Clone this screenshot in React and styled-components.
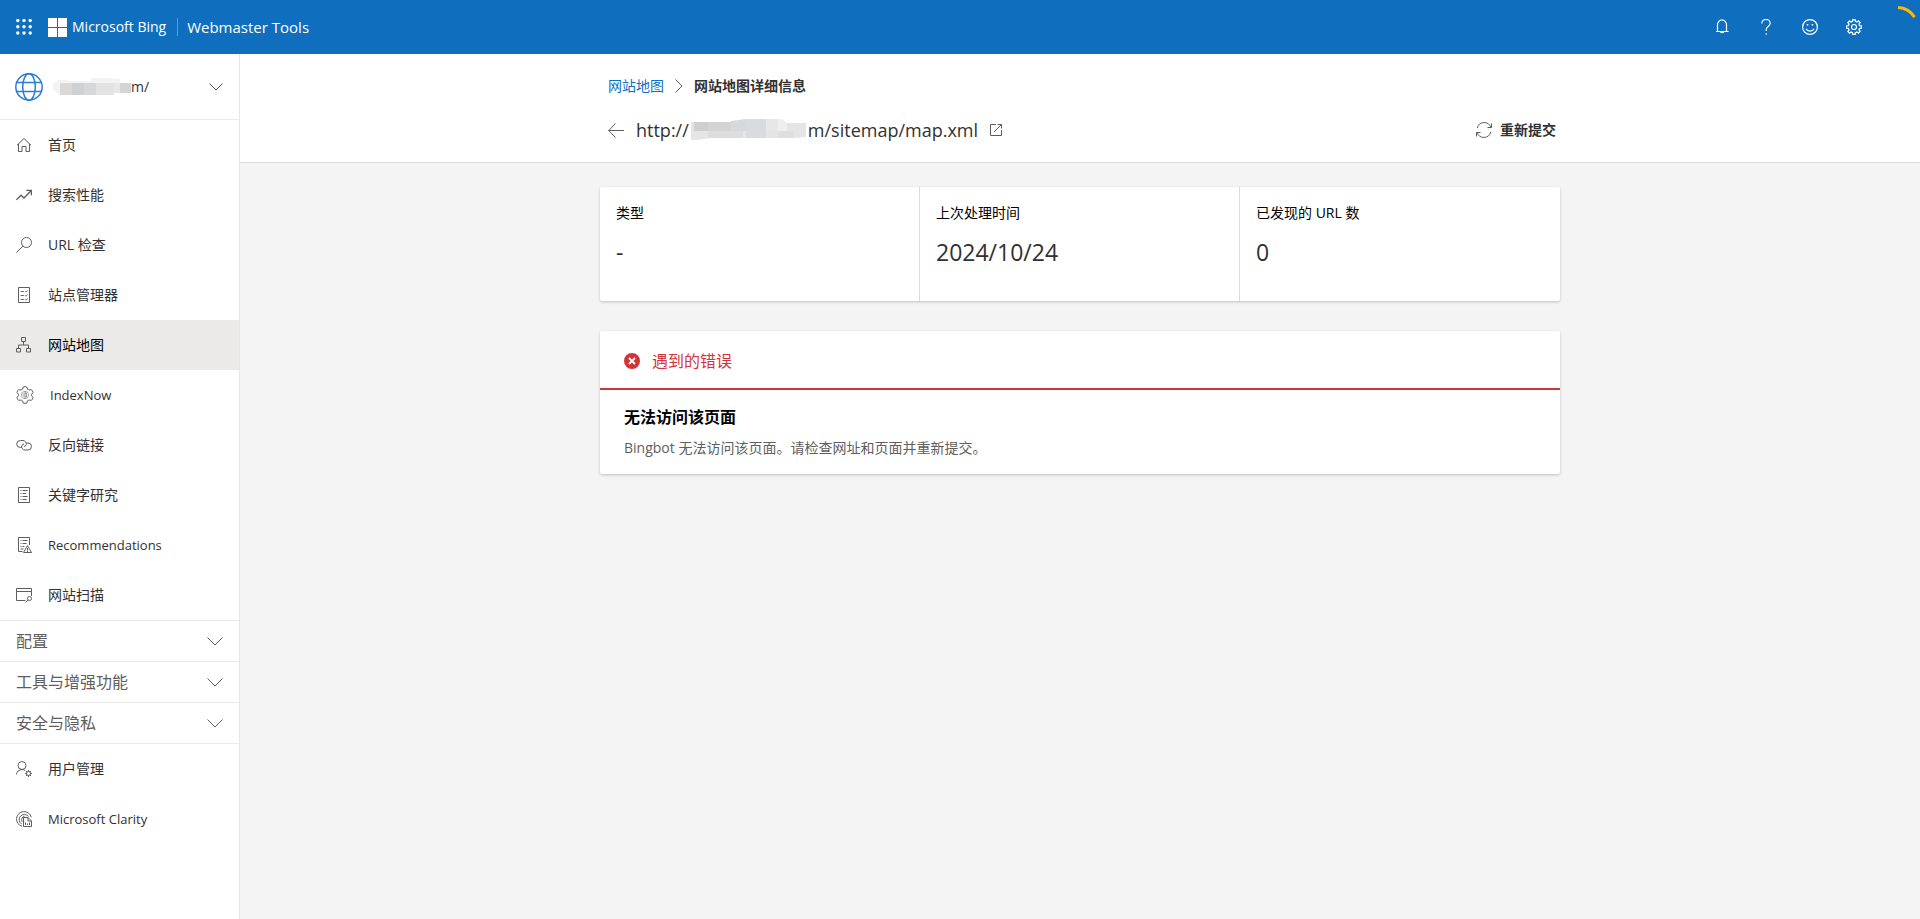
import React from "react";
import styled, { createGlobalStyle } from "styled-components";

const GlobalStyle = createGlobalStyle`
  *, *::before, *::after { box-sizing: border-box; }
  body {
    margin: 0;
    background: #f4f4f4;
    color: #323130;
    font: 400 14px/20px "Open Sans", "Noto Sans CJK SC", sans-serif;
  }
  button { font: inherit; color: inherit; background: none; border: 0; padding: 0; cursor: pointer; }
  a { color: inherit; text-decoration: none; }
  h1, h2, h3, p, dl, dd, dt, ul, ol { margin: 0; padding: 0; }
  ul, ol { list-style: none; }
  svg { display: block; flex: none; }
`;

const Page = styled.div`
  display: flex;
  flex-direction: column;
  min-height: 100vh;
`;

/* ---------- top bar ---------- */

const TopBar = styled.header`
  display: flex;
  align-items: center;
  height: 54px;
  padding-left: 16px;
  background: #106ebe;
  color: #fff;
`;

const Brand = styled.a`
  display: flex;
  align-items: center;
  gap: 5px;
  margin-left: 16px;
  font-size: 14px;
  font-weight: 500;
`;

const ProductLink = styled.a`
  margin-left: 11px;
  padding-left: 9px;
  border-left: 1px solid #5b9bd3;
  font-size: 15px;
  line-height: 18px;
  font-weight: 500;
`;

const TopActions = styled.div`
  display: flex;
  align-self: stretch;
  margin-left: auto;
`;

const TopButton = styled.button`
  display: grid;
  place-items: center;
  width: 44px;
`;

/* ---------- side navigation ---------- */

const Body = styled.div`
  display: flex;
  flex: 1;
`;

const Sidebar = styled.nav`
  flex: none;
  width: 240px;
  background: #fff;
  border-right: 1px solid #e6e6e6;
`;

const SitePicker = styled.button`
  display: flex;
  align-items: center;
  width: 100%;
  height: 66px;
  padding: 0 16px 0 15px;
  border-bottom: 1px solid #eaeaea;
`;

const SiteName = styled.span`
  display: flex;
  align-items: center;
  flex: 1;
  margin-left: 10px;
`;

const NavLink = styled.a`
  display: flex;
  align-items: center;
  gap: 16px;
  height: 50px;
  padding: 0 16px;
  background: ${(p) => (p.$active ? "#ebeae9" : "transparent")};
  color: ${(p) => (p.$active ? "#000" : "#323130")};
  font-size: ${(p) => (p.$latin ? "13px" : "14px")};
  svg { color: #605e5c; }
`;

const Groups = styled.div`
  border-bottom: 1px solid #eaeaea;
`;

const GroupButton = styled.button`
  display: flex;
  align-items: center;
  justify-content: space-between;
  width: 100%;
  height: 41px;
  padding: 0 16px;
  border-top: 1px solid #eaeaea;
  font-size: 16px;
  color: #605e5c;
`;

/* ---------- content ---------- */

const Main = styled.main`
  flex: 1;
  min-width: 0;
`;

const PageHead = styled.div`
  background: #fff;
  border-bottom: 1px solid #dcdcdc;
`;

const Container = styled.div`
  max-width: 960px;
  margin: 0 auto;
`;

const HeadInner = styled(Container)`
  padding: 22px 4px 18px 8px;
`;

const Crumbs = styled.ol`
  display: flex;
  align-items: center;
  gap: 11px;
  height: 20px;
`;

const CrumbLink = styled.a`
  color: #106ebe;
`;

const CurrentCrumb = styled.span`
  font-weight: 600;
`;

const TitleRow = styled.div`
  display: flex;
  align-items: center;
  margin-top: 20px;
  height: 28px;
`;

const Title = styled.h1`
  display: flex;
  align-items: center;
  gap: 2px;
  margin: 0 12px;
  font-size: 18px;
  line-height: 28px;
  font-weight: 400;
`;

const Resubmit = styled.button`
  display: flex;
  align-items: center;
  gap: 8px;
  margin-left: auto;
  font-weight: 600;
  svg { color: #605e5c; }
`;

const Cards = styled(Container)`
  display: flex;
  flex-direction: column;
  gap: 30px;
  padding-top: 24px;
`;

const Card = styled.section`
  background: #fff;
  border-radius: 2px;
  box-shadow: 0 1px 3px rgba(0, 0, 0, 0.22);
`;

const Stats = styled.dl`
  display: grid;
  grid-template-columns: repeat(3, 1fr);
  height: 114px;
`;

const Stat = styled.div`
  padding: 16px;
  &:not(:last-child) { border-right: 1px solid #dcdcdc; }
`;

const StatLabel = styled.dt`
  color: #000;
`;

const StatValue = styled.dd`
  margin-top: 12px;
  font-size: 23px;
  line-height: 34px;
`;

const ErrorHead = styled.h2`
  display: flex;
  align-items: center;
  gap: 12px;
  height: 59px;
  padding: 2px 24px 0;
  border-bottom: 2px solid #d13438;
  font-size: 16px;
  font-weight: 400;
  color: #d13438;
`;

const ErrorBody = styled.div`
  padding: 16px 24px;
`;

const ErrorTitle = styled.h3`
  font-size: 16px;
  line-height: 22px;
  font-weight: 600;
  color: #000;
`;

const ErrorText = styled.p`
  margin-top: 10px;
  font-size: 14px;
  line-height: 20px;
  color: #605e5c;
`;

/* ---------- icons ---------- */

const Icon = ({ size = 16, w = size, h = size, vb, sw = 1, children }) => (
  <svg width={w} height={h} viewBox={vb || `0 0 ${w} ${h}`} fill="none" stroke="currentColor" strokeWidth={sw} aria-hidden="true">
    {children}
  </svg>
);

const gearPath = (cx, cy, teeth, ro, ri) => {
  const pts = [];
  for (let i = 0; i < teeth; i++) {
    const base = (i * 2 * Math.PI) / teeth - Math.PI / 2;
    const step = Math.PI / teeth;
    [[-0.62, ri], [-0.42, ro], [0.42, ro], [0.62, ri]].forEach(([k, r]) => {
      const a = base + k * step;
      pts.push(`${(cx + r * Math.cos(a)).toFixed(2)} ${(cy + r * Math.sin(a)).toFixed(2)}`);
    });
  }
  return `M${pts.join("L")}Z`;
};

const Waffle = () => (
  <svg width="16" height="16" viewBox="0 0 16 16" fill="currentColor" aria-hidden="true">
    {[1.6, 7.8, 14].map((y) => [1.8, 8, 14.2].map((x) => <circle key={`${x}-${y}`} cx={x} cy={y} r="1.7" />))}
  </svg>
);

const WindowsLogo = () => (
  <svg width="19" height="19" viewBox="0 0 19 19" fill="currentColor" aria-hidden="true">
    <path d="M0 0h9v9H0zM10 0h9v9h-9zM0 10h9v9H0zM10 10h9v9h-9z" />
  </svg>
);

const Bell = () => (
  <Icon sw={1.2}>
    <path d="M3.500 12.500V6a4.500 5.200 0 0 1 9 0v6.500M2 12.500h12.500M6.300 12.700a2 1.900 0 0 0 3.600 0" />
  </Icon>
);

const Question = () => (
  <Icon sw={1.2}>
    <path d="M3.800 4.500A4.200 4 0 0 1 12.200 4.300C12.200 7.400 8.200 7.500 8.200 10.500V12" />
    <path d="M8.200 14.200v1.500" />
  </Icon>
);

const Smiley = () => (
  <Icon sw={1.2}>
    <circle cx="8" cy="8" r="7.400" />
    <path d="M4 9.800a4.300 3.600 0 0 0 8 0" />
    <path d="M4.800 5.700h1.500M9.700 5.700h1.500" strokeWidth="1.600" />
  </Icon>
);

const Gear = () => (
  <Icon sw={1.2}>
    <path d={gearPath(8, 8, 8, 7.5, 5.8)} />
    <circle cx="8" cy="8" r="2.500" />
  </Icon>
);

const LoadingArc = () => (
  <svg width="44" height="54" viewBox="0 0 44 54" fill="none" stroke="#ffb900" strokeWidth="3" aria-hidden="true">
    <path d="M22 7.500A20.500 20.500 0 0 1 38.500 17.200" />
  </svg>
);

const Globe = () => (
  <svg width="28" height="28" viewBox="0 0 28 28" fill="none" stroke="#2b7cd3" strokeWidth="1.500" aria-hidden="true">
    <circle cx="14" cy="14" r="13.200" />
    <ellipse cx="14" cy="14" rx="6.300" ry="13.200" />
    <path d="M2 9.500h24M2 18.500h24" />
  </svg>
);

const ChevronDown = ({ w = 16 }) => (
  <Icon w={w} h={w === 16 ? 9 : 8} vb="0 0 16 9">
    <path d="M.5.500L8 8L15.500.500" />
  </Icon>
);

const ChevronRight = () => (
  <Icon w={8} h={14}>
    <path d="M.5.500L7 7L.5 13.500" stroke="#605e5c" />
  </Icon>
);

const Home = () => (
  <Icon><path d="M1 8.200L8 1.500L15 8.200M2.500 7v7.500H6V9.500h4v5h3.500V7" /></Icon>
);

const Trend = () => (
  <Icon sw={1.3}><path d="M.4 12.800L5 8.200L8 11L15 3.700M10.300 3.400H15.400V8.300" /></Icon>
);

const Search = () => (
  <Icon><circle cx="10.500" cy="5.500" r="5" /><path d="M7 9L.4 15.600" /></Icon>
);

const Checklist = () => (
  <Icon>
    <path d="M2.500.5h11v15h-11z" />
    <path d="M4.500 4.500h3.500M4.500 8.500h3.500M4.500 12.500h3.500M9 4.200l1 1L11.800 3.400M9 8.200l1 1L11.800 7.400M9 12.200l1 1L11.800 11.400" strokeWidth=".9" />
  </Icon>
);

const Sitemap = () => (
  <Icon>
    <path d="M5.500.5h4v4h-4zM.5 11.500h4v3.500h-4zM10.500 11.500h4v3.500h-4zM7.500 4.500V8M2.500 11.500V8h10v3.500" />
  </Icon>
);

const IndexNow = () => (
  <Icon size={18}>
    <path d="M6.500 3.200L7.200 1Q9 .2 10.800 1L11.500 3.200Q12.300 3.600 13 4L15.300 3.600Q16.800 4.800 17 6.600L15.500 8.300V9.700L17 11.400Q16.800 13.200 15.300 14.400L13 14Q12.300 14.400 11.500 14.800L10.800 17Q9 17.800 7.200 17L6.500 14.800Q5.700 14.400 5 14L2.700 14.400Q1.200 13.200 1 11.400L2.500 9.700V8.300L1 6.600Q1.200 4.800 2.700 3.600L5 4Q5.700 3.600 6.500 3.200Z" />
    <circle cx="9" cy="9" r="3.700" strokeWidth=".5" />
    <path d="M9 5.300v7.400M9 7h1.500v4H9M6.500 8h2M6.500 10h2" strokeWidth=".6" />
  </Icon>
);

const Backlink = () => (
  <Icon>
    <path d="M5.800 10.500H4.500A3.800 3.500 0 0 1 4.500 3.500H7A3.500 3.500 0 0 1 10.300 7.500Q9.800 9.300 8 9.500" />
    <path d="M10.500 6H12A3.500 3.500 0 0 1 12 13H9A3.500 3.500 0 0 1 5.700 9Q6.200 7 8 7" />
  </Icon>
);

const Keywords = () => (
  <Icon>
    <path d="M2.500.5h11v15h-11z" />
    <path d="M4.500 3.500h1M6.500 3.500h5M4.500 6.500h1M6.500 6.500h3.500M4.500 9.500h1M6.500 9.500h5M4.500 12.500h1M6.500 12.500h4" />
  </Icon>
);

const Recommend = () => (
  <Icon>
    <path d="M6.500 14.500h-4V.5h11V8" />
    <path d="M4.500 3.500h1M6.500 3.500h5M4.500 6.500h1M6.500 6.500h4M4.500 9.500h1M6.500 9.500h2M4.500 12h3" />
    <path d="M11.500 8.500L15.500 15.500H7.500ZM11.500 11v2.500M11.500 14v1" />
  </Icon>
);

const SiteScan = () => (
  <Icon>
    <path d="M9.500 13.500H.5v-12h15V9M.5 4.500h15" />
    <circle cx="13.500" cy="11.500" r="2" />
    <path d="M12 13L9.500 15.500" />
  </Icon>
);

const UserGear = () => (
  <Icon>
    <circle cx="6" cy="4.500" r="4" />
    <path d="M.5 13.500Q1 9 6 8.500Q7.800 8.600 9 9.500" />
    <circle cx="12.500" cy="12.500" r="2" />
    <path d="M12.500 9v1.500M12.500 14.500V16M9 12.500h1.500M14.500 12.500H16M10 10l1 1M14 14l1 1M15 10l-1 1M11 14l-1 1" />
  </Icon>
);

const Clarity = () => (
  <Icon>
    <path d="M6 15.300A7.500 7.500 0 1 1 15.300 6.300M5.500 13A5.200 5.200 0 1 1 12.500 5.500M6 10.800Q4.800 6 8.500 5.300" />
    <path d="M7.500 6.500h4.500l3.500 3.500v5.500h-8zM12 6.500v3.500h3.500M9.500 11.500v2.500M11.500 12.500v1.500M13.500 11.500v2.500" />
  </Icon>
);

const BackArrow = () => (
  <Icon><path d="M.5 8.500H16M7.500 1.500L.7 8.500L7.500 15.500" stroke="#605e5c" /></Icon>
);

const OpenExternal = () => (
  <Icon size={12}><path d="M6 .5H.5v11h11V6M7.500.5h4v4M11.500.5L4 8" stroke="#605e5c" /></Icon>
);

const Sync = () => (
  <Icon>
    <path d="M1.300 6A7 7 0 0 1 14.800 5.500M15.500 1.500V5.500H11.500M14.700 10A7 7 0 0 1 1.200 10.500M.5 14.500V10.500H4.500" />
  </Icon>
);

const ErrorBadge = () => (
  <svg width="16" height="16" viewBox="0 0 16 16" aria-hidden="true">
    <circle cx="8" cy="8" r="8" fill="#d13438" />
    <path d="M5 5l6 6M11 5l-6 6" stroke="#fff" strokeWidth="1.800" />
  </svg>
);

/* blurred-out parts of the site address */
const SiteMask = () => (
  <svg width="78" height="18" viewBox="0 0 78 18" aria-hidden="true">
    <path d="M0 6L5 2H15V3H38V0H58L67 1V5H78V16L61 15V17H7L0 11Z" fill="#f3f3f4" />
    <path d="M7 5H20V17H7z" fill="#dad9d8" />
    <path d="M19 5H31V17H19z" fill="#cfd1d3" />
    <path d="M31 5H43V17H31z" fill="#d6d7d9" />
    <path d="M43 5H61V17H43z" fill="#e3e3e4" />
    <path d="M61 5H67V15H61z" fill="#e8e8e9" />
    <path d="M67 5H78V15H67z" fill="#d4d4d5" />
  </svg>
);

const UrlMask = () => (
  <svg width="115" height="22" viewBox="0 0 115 22" aria-hidden="true">
    <path d="M0 3H42L55 0H90L96 4H115V18L103 19H20L6 21H0Z" fill="#e5e5e6" />
    <path d="M3 3H17V12H3z" fill="#cfcfd0" />
    <path d="M17 3H40V12H17z" fill="#d3d3d3" />
    <path d="M40 2L55 0V12H40z" fill="#d7d8d9" />
    <path d="M55 0H75V19H55z" fill="#dadbde" />
    <path d="M17 12H52V19H17z" fill="#dddddd" />
    <path d="M75 0H87V12H75z" fill="#e7e7e7" />
    <path d="M87 0H90L96 4V12H87z" fill="#efefef" />
    <path d="M87 12H103V19H87z" fill="#dfdfe0" />
  </svg>
);

const navItems = [
  { label: "首页", icon: Home },
  { label: "搜索性能", icon: Trend },
  { label: "URL 检查", icon: Search },
  { label: "站点管理器", icon: Checklist },
  { label: "网站地图", icon: Sitemap, active: true },
  { label: "IndexNow", icon: IndexNow, latin: true },
  { label: "反向链接", icon: Backlink },
  { label: "关键字研究", icon: Keywords },
  { label: "Recommendations", icon: Recommend, latin: true },
  { label: "网站扫描", icon: SiteScan },
];

const groups = ["配置", "工具与增强功能", "安全与隐私"];

const footerItems = [
  { label: "用户管理", icon: UserGear },
  { label: "Microsoft Clarity", icon: Clarity, latin: true },
];

const stats = [
  { label: "类型", value: "-" },
  { label: "上次处理时间", value: "2024/10/24" },
  { label: "已发现的 URL 数", value: "0" },
];

const NavList = ({ items }) => (
  <ul>
    {items.map(({ label, icon: Glyph, active, latin }) => (
      <li key={label}>
        <NavLink href="#" $active={active} $latin={latin} aria-current={active ? "page" : undefined}>
          <Glyph />
          {label}
        </NavLink>
      </li>
    ))}
  </ul>
);

export default function App() {
  return (
    <Page>
      <GlobalStyle />
      <TopBar>
        <button aria-label="应用启动器"><Waffle /></button>
        <Brand href="#"><WindowsLogo />Microsoft Bing</Brand>
        <ProductLink href="#">Webmaster Tools</ProductLink>
        <TopActions>
          <TopButton aria-label="通知"><Bell /></TopButton>
          <TopButton aria-label="帮助"><Question /></TopButton>
          <TopButton aria-label="反馈"><Smiley /></TopButton>
          <TopButton aria-label="设置"><Gear /></TopButton>
          <TopButton aria-label="帐户"><LoadingArc /></TopButton>
        </TopActions>
      </TopBar>
      <Body>
        <Sidebar>
          <SitePicker>
            <Globe />
            <SiteName><SiteMask />m/</SiteName>
            <ChevronDown w={14} />
          </SitePicker>
          <NavList items={navItems} />
          <Groups>
            {groups.map((g) => (
              <GroupButton key={g}>{g}<ChevronDown /></GroupButton>
            ))}
          </Groups>
          <NavList items={footerItems} />
        </Sidebar>
        <Main>
          <PageHead>
            <HeadInner>
              <Crumbs>
                <li><CrumbLink href="#">网站地图</CrumbLink></li>
                <li aria-hidden="true"><ChevronRight /></li>
                <li><CurrentCrumb>网站地图详细信息</CurrentCrumb></li>
              </Crumbs>
              <TitleRow>
                <button aria-label="返回"><BackArrow /></button>
                <Title>http://<UrlMask />m/sitemap/map.xml</Title>
                <a href="#" aria-label="打开"><OpenExternal /></a>
                <Resubmit><Sync />重新提交</Resubmit>
              </TitleRow>
            </HeadInner>
          </PageHead>
          <Cards>
            <Card>
              <Stats>
                {stats.map((s) => (
                  <Stat key={s.label}>
                    <StatLabel>{s.label}</StatLabel>
                    <StatValue>{s.value}</StatValue>
                  </Stat>
                ))}
              </Stats>
            </Card>
            <Card>
              <ErrorHead><ErrorBadge />遇到的错误</ErrorHead>
              <ErrorBody>
                <ErrorTitle>无法访问该页面</ErrorTitle>
                <ErrorText>Bingbot 无法访问该页面。请检查网址和页面并重新提交。</ErrorText>
              </ErrorBody>
            </Card>
          </Cards>
        </Main>
      </Body>
    </Page>
  );
}
